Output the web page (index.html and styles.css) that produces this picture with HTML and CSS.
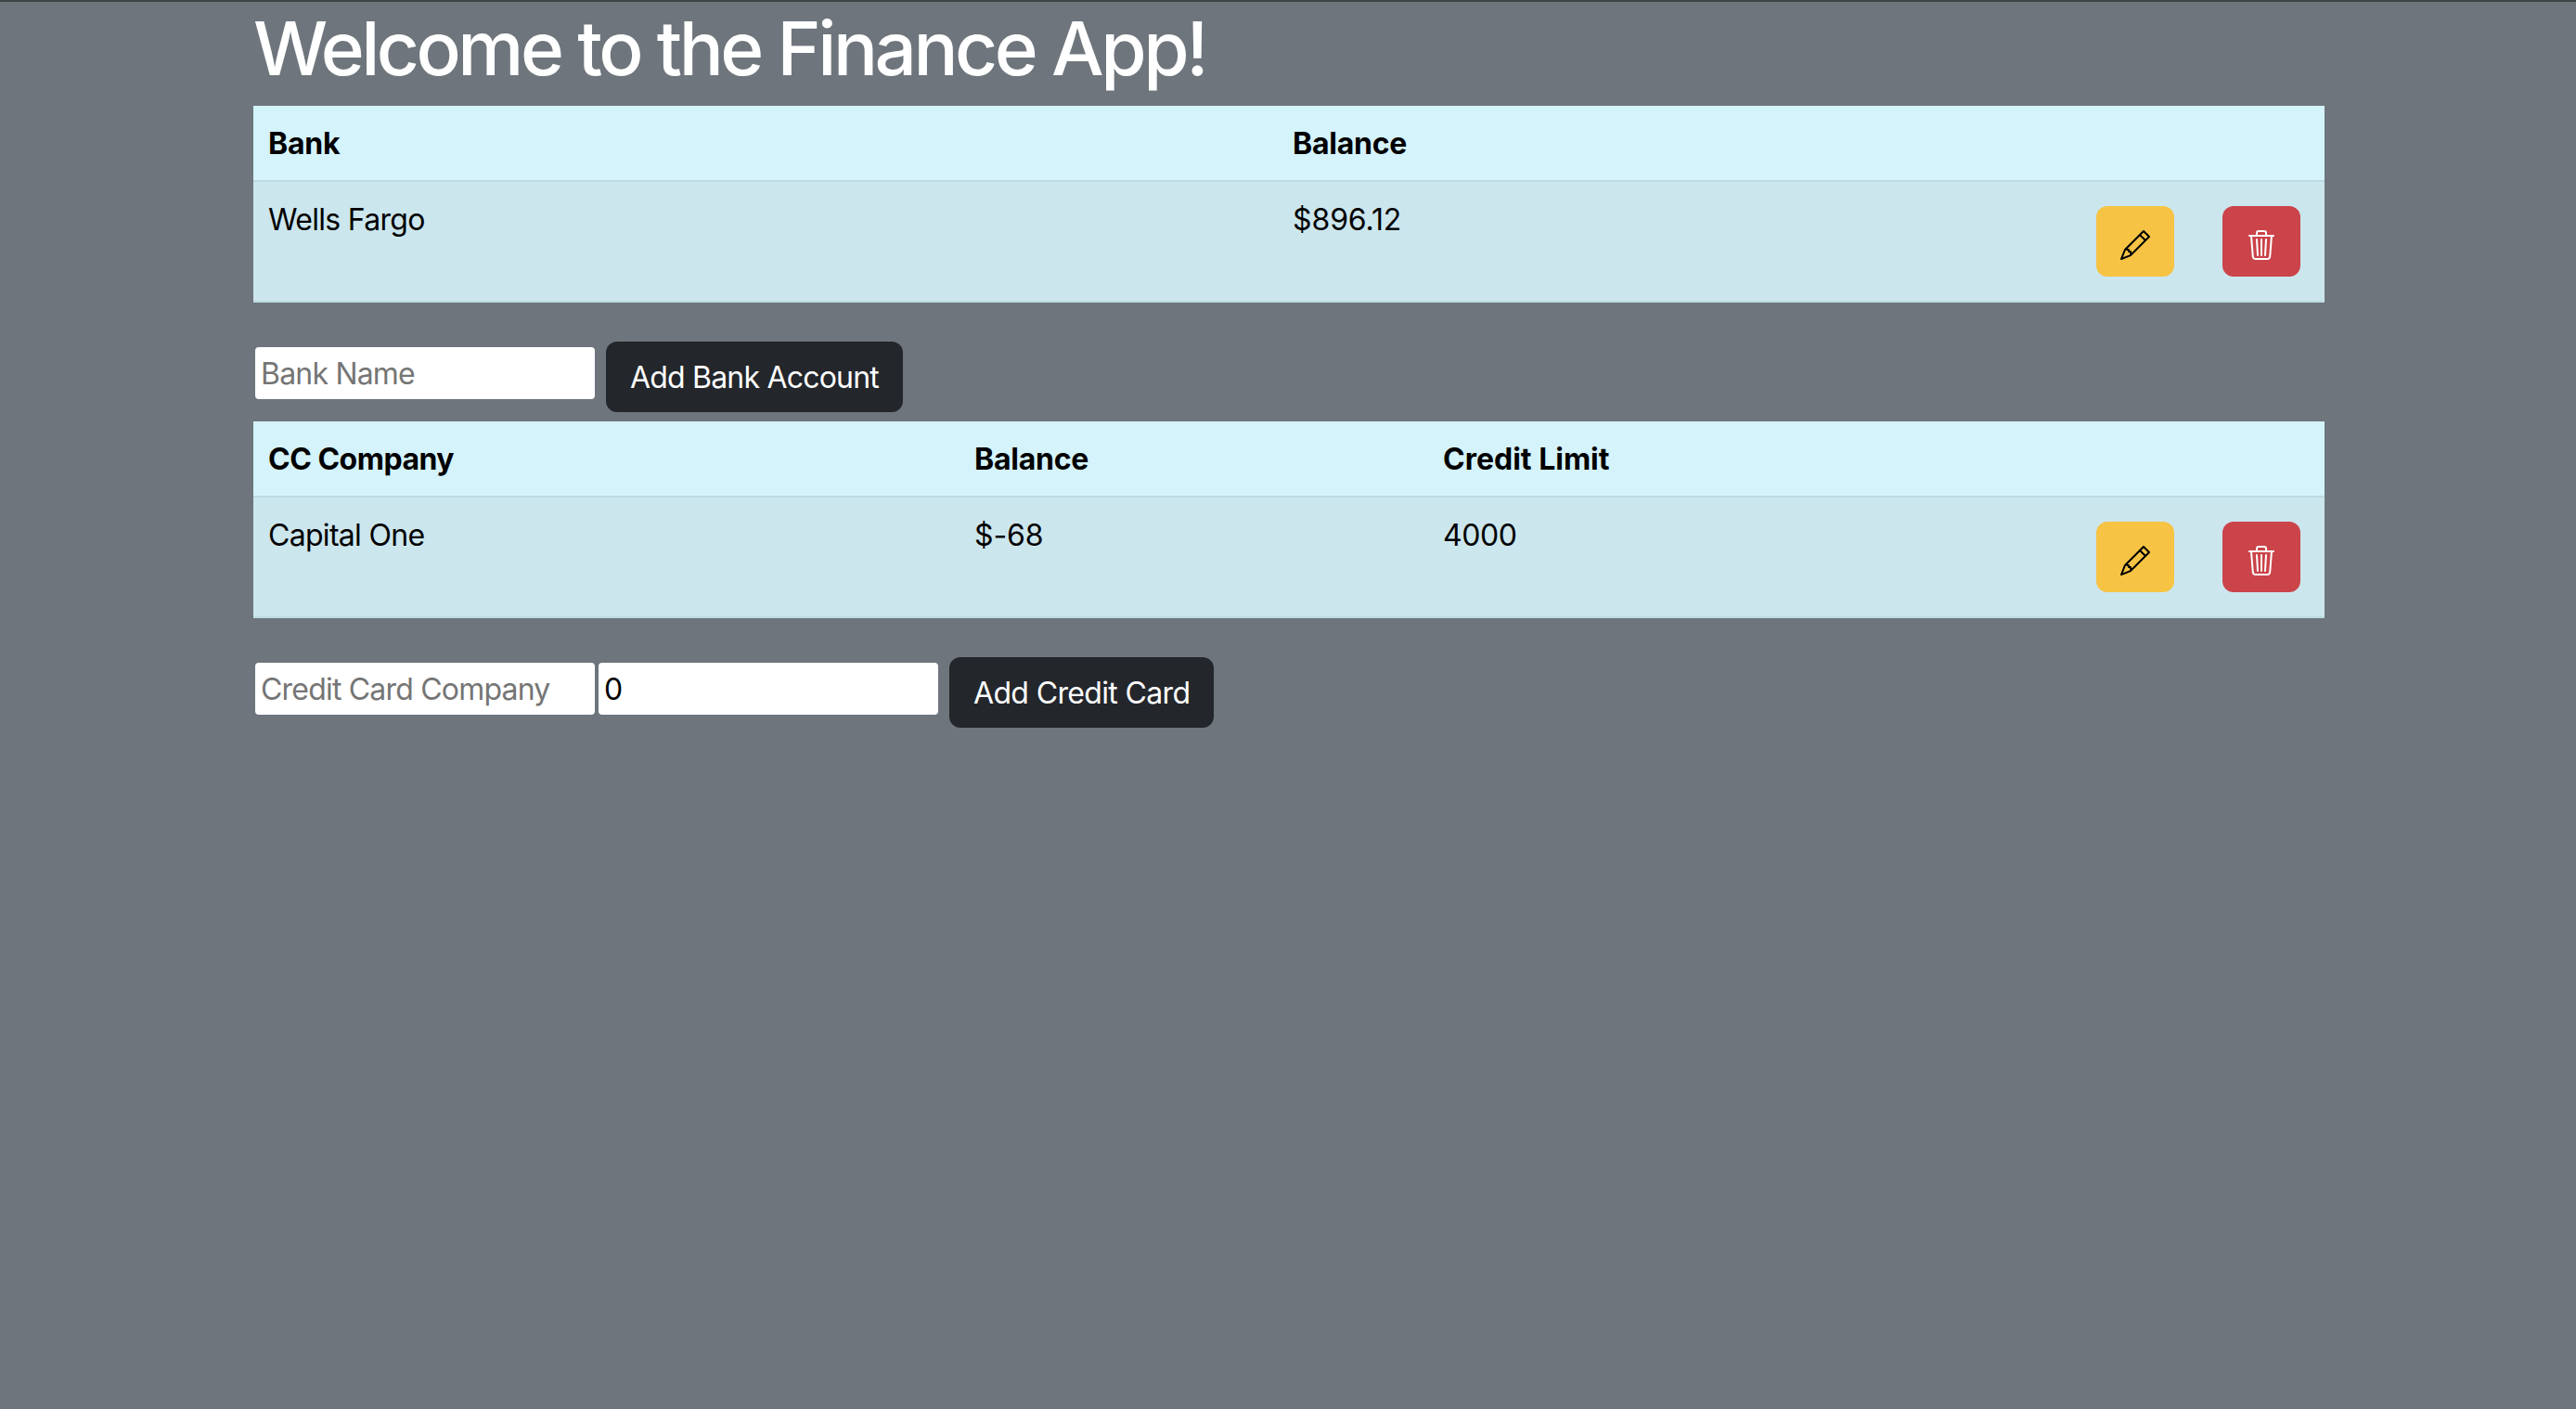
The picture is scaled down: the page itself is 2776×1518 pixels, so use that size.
FILE: index.html
```html
<!DOCTYPE html>
<html lang="en">
<head>
<meta charset="utf-8">
<title>Finance App</title>
<link rel="stylesheet" href="styles.css">
</head>
<body>
<main class="container">
  <h1 class="title">Welcome to the Finance App!</h1>

  <table class="data-table">
    <colgroup><col class="bank-col"><col class="bank-balance-col"><col class="action-col"><col class="action-col"></colgroup>
    <thead>
      <tr><th>Bank</th><th>Balance</th><th></th><th></th></tr>
    </thead>
    <tbody>
      <tr>
        <td>Wells Fargo</td>
        <td class="num">$896.12</td>
        <td><button class="btn icon-btn edit" type="button" aria-label="Edit"><svg class="icon" viewBox="0 0 16 16" fill="currentColor"><path d="M12.146.146a.5.5 0 0 1 .708 0l3 3a.5.5 0 0 1 0 .708l-10 10a.5.5 0 0 1-.168.11l-5 2a.5.5 0 0 1-.65-.65l2-5a.5.5 0 0 1 .11-.168l10-10zM11.207 2.5 13.5 4.793 14.793 3.5 12.5 1.207 11.207 2.5zm1.586 3L10.5 3.207 4 9.707V10h.5a.5.5 0 0 1 .5.5v.5h.5a.5.5 0 0 1 .5.5v.5h.293l6.5-6.5zm-9.761 5.175-.106.106-1.528 3.821 3.821-1.528.106-.106A.5.5 0 0 1 5 12.5V12h-.5a.5.5 0 0 1-.5-.5V11h-.5a.5.5 0 0 1-.468-.325z"/></svg></button></td>
        <td><button class="btn icon-btn delete" type="button" aria-label="Delete"><svg class="icon" viewBox="0 0 16 16" fill="currentColor"><path d="M6.5 1h3a.5.5 0 0 1 .5.5v1H6v-1a.5.5 0 0 1 .5-.5ZM11 2.5v-1A1.5 1.5 0 0 0 9.5 0h-3A1.5 1.5 0 0 0 5 1.5v1H2.506a.58.58 0 0 0-.01 0H1.5a.5.5 0 0 0 0 1h.538l.853 10.66A2 2 0 0 0 4.885 16h6.23a2 2 0 0 0 1.994-1.84l.853-10.66h.538a.5.5 0 0 0 0-1h-.995a.59.59 0 0 0-.01 0H11Zm1.958 1-.846 10.58a1 1 0 0 1-.997.92h-6.23a1 1 0 0 1-.997-.92L3.042 3.5h9.916Zm-7.487 1a.5.5 0 0 1 .528.47l.5 8.5a.5.5 0 0 1-.998.06L5 5.03a.5.5 0 0 1 .47-.53Zm5.058 0a.5.5 0 0 1 .47.53l-.5 8.5a.5.5 0 1 1-.998-.06l.5-8.5a.5.5 0 0 1 .528-.47ZM8 4.5a.5.5 0 0 1 .5.5v8.5a.5.5 0 0 1-1 0V5a.5.5 0 0 1 .5-.5Z"/></svg></button></td>
      </tr>
    </tbody>
  </table>

  <form class="add-form">
    <input class="field" type="text" placeholder="Bank Name">
    <button class="btn submit" type="button">Add Bank Account</button>
  </form>

  <table class="data-table">
    <colgroup><col class="cc-col"><col class="cc-balance-col"><col class="cc-limit-col"><col class="action-col"><col class="action-col"></colgroup>
    <thead>
      <tr><th class="tight">CC Company</th><th>Balance</th><th class="loose">Credit Limit</th><th></th><th></th></tr>
    </thead>
    <tbody>
      <tr>
        <td>Capital One</td>
        <td class="num">$-68</td>
        <td class="limit">4000</td>
        <td><button class="btn icon-btn edit" type="button" aria-label="Edit"><svg class="icon" viewBox="0 0 16 16" fill="currentColor"><path d="M12.146.146a.5.5 0 0 1 .708 0l3 3a.5.5 0 0 1 0 .708l-10 10a.5.5 0 0 1-.168.11l-5 2a.5.5 0 0 1-.65-.65l2-5a.5.5 0 0 1 .11-.168l10-10zM11.207 2.5 13.5 4.793 14.793 3.5 12.5 1.207 11.207 2.5zm1.586 3L10.5 3.207 4 9.707V10h.5a.5.5 0 0 1 .5.5v.5h.5a.5.5 0 0 1 .5.5v.5h.293l6.5-6.5zm-9.761 5.175-.106.106-1.528 3.821 3.821-1.528.106-.106A.5.5 0 0 1 5 12.5V12h-.5a.5.5 0 0 1-.5-.5V11h-.5a.5.5 0 0 1-.468-.325z"/></svg></button></td>
        <td><button class="btn icon-btn delete" type="button" aria-label="Delete"><svg class="icon" viewBox="0 0 16 16" fill="currentColor"><path d="M6.5 1h3a.5.5 0 0 1 .5.5v1H6v-1a.5.5 0 0 1 .5-.5ZM11 2.5v-1A1.5 1.5 0 0 0 9.5 0h-3A1.5 1.5 0 0 0 5 1.5v1H2.506a.58.58 0 0 0-.01 0H1.5a.5.5 0 0 0 0 1h.538l.853 10.66A2 2 0 0 0 4.885 16h6.23a2 2 0 0 0 1.994-1.84l.853-10.66h.538a.5.5 0 0 0 0-1h-.995a.59.59 0 0 0-.01 0H11Zm1.958 1-.846 10.58a1 1 0 0 1-.997.92h-6.23a1 1 0 0 1-.997-.92L3.042 3.5h9.916Zm-7.487 1a.5.5 0 0 1 .528.47l.5 8.5a.5.5 0 0 1-.998.06L5 5.03a.5.5 0 0 1 .47-.53Zm5.058 0a.5.5 0 0 1 .47.53l-.5 8.5a.5.5 0 1 1-.998-.06l.5-8.5a.5.5 0 0 1 .528-.47ZM8 4.5a.5.5 0 0 1 .5.5v8.5a.5.5 0 0 1-1 0V5a.5.5 0 0 1 .5-.5Z"/></svg></button></td>
      </tr>
    </tbody>
  </table>

  <form class="add-form">
    <input class="field" type="text" placeholder="Credit Card Company">
    <input class="field" type="number" value="0">
    <button class="btn submit wide" type="button">Add Credit Card</button>
  </form>
</main>
</body>
</html>
```

FILE: styles.css
```css
* {
  box-sizing: border-box;
}

html,
body {
  height: 100%;
}

body {
  margin: 0;
  background: #6e757c;
  border-top: 2px solid #3f4346;
  color: #000;
  font-family: Inter, "Liberation Sans", sans-serif;
  font-size: 32px;
  line-height: 48px;
  overflow: hidden;
}

.container {
  width: 2232px;
  margin-left: 273px;
}

.title {
  margin: 0 0 16px;
  padding-top: 2px;
  height: 96px;
  color: #fff;
  font-size: 80px;
  font-weight: 500;
  line-height: 96px;
  letter-spacing: -3.5px;
}

.data-table {
  width: 2232px;
  margin: 0 0 32px;
  border-collapse: collapse;
  table-layout: fixed;
}

.bank-col { width: 1104px; }
.bank-balance-col { width: 856px; }
.cc-col { width: 761px; }
.cc-balance-col { width: 505px; }
.cc-limit-col { width: 694px; }
.action-col { width: 136px; }

.data-table th,
.data-table td {
  padding: 17px 16px 15px;
  border-bottom: 2px solid #bcdbe2;
  text-align: left;
  vertical-align: top;
}

.data-table th {
  background: #d4f3fb;
  font-weight: 700;
  letter-spacing: -0.25px;
}

.data-table td {
  background: #cce6ed;
  font-weight: 400;
  letter-spacing: -0.7px;
}

.data-table .num {
  letter-spacing: -0.1px;
}

.data-table .limit {
  letter-spacing: -0.4px;
}

.data-table .tight {
  letter-spacing: -0.5px;
}

.data-table .loose {
  letter-spacing: 0;
}

.btn {
  display: block;
  margin: 10px;
  border: 2px solid transparent;
  border-radius: 12px;
  font: inherit;
  color: #fff;
}

.icon-btn {
  width: 84px;
  height: 76px;
  margin-top: 9px;
  margin-bottom: 11px;
  padding: 8px 24px 0;
}

.icon {
  display: block;
  width: 32px;
  height: 32px;
}

.edit {
  background: #f6c344;
  color: #000;
}

.delete {
  background: #cb444a;
  color: #fff;
}

.submit {
  height: 76px;
  padding: 13px 24px 11px;
  background: #23262b;
  letter-spacing: -0.8px;
  white-space: nowrap;
}

.wide {
  letter-spacing: -0.65px;
}

.add-form {
  display: flex;
  align-items: flex-start;
}

.field {
  width: 370px;
  height: 60px;
  margin-top: 14px;
  padding: 0 6px;
  border: 2px solid #6e757c;
  border-radius: 6px;
  background: #fff;
  color: #000;
  font: inherit;
  line-height: 52px;
  appearance: textfield;
}

.field::placeholder {
  color: #757575;
  opacity: 1;
  letter-spacing: -0.8px;
}
```
